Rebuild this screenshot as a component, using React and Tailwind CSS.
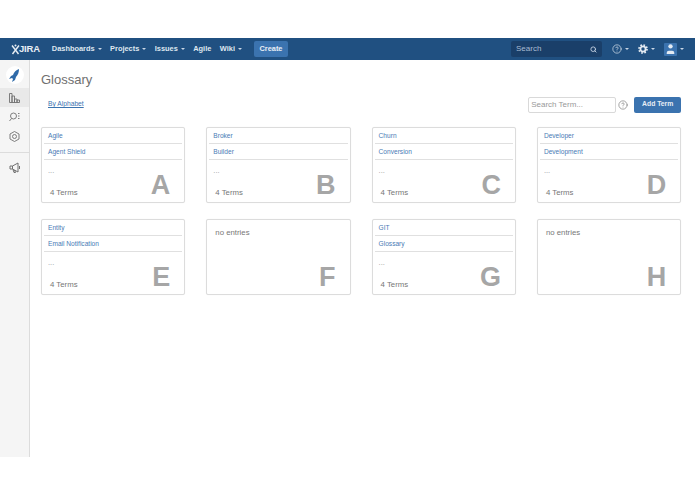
import React from 'react';
import { Search, CircleHelp, User } from 'lucide-react';

const cards = [
  { letter: 'A', terms: ['Agile', 'Agent Shield'] },
  { letter: 'B', terms: ['Broker', 'Builder'] },
  { letter: 'C', terms: ['Churn', 'Conversion'] },
  { letter: 'D', terms: ['Developer', 'Development'] },
  { letter: 'E', terms: ['Entity', 'Email Notification'] },
  { letter: 'F', terms: [] },
  { letter: 'G', terms: ['GIT', 'Glossary'] },
  { letter: 'H', terms: [] },
];

function Caret() {
  return <span className="ml-[3px] inline-block h-0 w-0 border-x-[2px] border-t-[2px] border-x-transparent border-t-[#c9d6e6] align-middle" />;
}

function NavItem({ label, caret = true }) {
  return (
    <span className="flex items-center text-[7.4px] font-bold text-[#dfe7f0]">
      {label}
      {caret && <Caret />}
    </span>
  );
}

function Card({ letter, terms }) {
  return (
    <div className="relative h-[76px] rounded-[2px] border border-[#dcdcdc] bg-white shadow-[0_0_1px_rgba(0,0,0,0.08)]">
      {terms.length > 0 ? (
        <div className="px-[2px]">
          {terms.map((t) => (
            <div key={t} className="flex h-[16px] items-center border-b border-[#e0e0e0] px-[4px] pt-[1px] text-[6.6px] text-[#4a7bb5]">
              {t}
            </div>
          ))}
          <div className="mt-[6px] px-[4px] text-[7.5px] leading-[10px] text-[#999]">...</div>
          <div className="mt-[12px] px-[6px] text-[7.8px] leading-[10px] text-[#777]">4 Terms</div>
        </div>
      ) : (
        <div className="px-[8px] pt-[8px] text-[7.8px] leading-[10px] text-[#777]">no entries</div>
      )}
      <span className="absolute bottom-[2px] right-[14px] text-[27px] font-bold leading-[30px] text-[#a6a6a6]">{letter}</span>
    </div>
  );
}

export default function App() {
  return (
    <div className="flex h-[494px] w-[695px] flex-col overflow-hidden bg-white font-['Liberation_Sans',Arial,sans-serif]">
      <div className="h-[38px]" />
      <header className="flex h-[22px] items-center bg-[#205081] pl-[11px] pr-[11px]">
        <div className="flex items-center text-[#e8eef5]">
          <svg width="9" height="11" viewBox="0 0 9 11" fill="none" stroke="currentColor" strokeWidth="1.4">
            <path d="M1 1.5 L4.5 6 L8 1.5 M4.5 6 L1.5 10 M4.5 6 L7.5 10" />
            <circle cx="4.5" cy="1.5" r="1" fill="currentColor" stroke="none" />
          </svg>
          <span className="-ml-[1px] text-[9.5px] font-bold tracking-[-0.2px]">JIRA</span>
        </div>
        <nav className="ml-[12px] flex items-center gap-[8.5px]">
          <NavItem label="Dashboards" />
          <NavItem label="Projects" />
          <NavItem label="Issues" />
          <NavItem label="Agile" caret={false} />
          <NavItem label="Wiki" />
        </nav>
        <span className="ml-[12px] flex h-[16px] w-[34px] items-center justify-center rounded-[2px] bg-[#3b73af] text-[7.4px] font-bold text-[#e8eef5]">Create</span>
        <div className="ml-auto flex h-[16px] w-[91px] items-center justify-between rounded-[2px] bg-[#1a3f69] px-[5px] text-[8px] text-[#a9bcd2]">
          Search
          <Search size={7} strokeWidth={3} className="text-[#c9d6e6]" />
        </div>
        <span className="ml-[10px] flex items-center text-[#e4ebf3]"><CircleHelp size={10} strokeWidth={1.6} /><Caret /></span>
        <span className="ml-[9px] flex items-center text-[#e4ebf3]">
          <svg width="10" height="10" viewBox="0 0 10 10" fill="none" stroke="currentColor">
            <circle cx="5" cy="5" r="2.6" strokeWidth="1.8" />
            <circle cx="5" cy="5" r="4" strokeWidth="1.7" strokeDasharray="1.6 1.54" />
          </svg>
          <Caret />
        </span>
        <span className="ml-[9px] flex items-center">
          <span className="flex h-[13px] w-[13px] items-center justify-center overflow-hidden rounded-[1px] bg-[#3b73af]"><User size={14} fill="#e4ebf3" strokeWidth={0} /></span>
          <Caret />
        </span>
      </header>
      <div className="flex h-[397px]">
        <aside className="flex w-[30px] shrink-0 flex-col border-r border-[#dcdcdc] bg-[#f5f5f5]">
          <div className="flex h-[28px] items-center justify-center pt-[2px]">
            <span className="flex h-[18px] w-[18px] items-center justify-center rounded-full bg-white">
              <svg width="11" height="13" viewBox="0 0 11 13" fill="#2f6aa8"><path d="M10 0 C7 1 5 3 4 6 L2 7 L0 10 L3 9 L4 10 L3 13 L6 11 L7 8 C9 6 10 3 10 0 Z" /></svg>
            </span>
          </div>
          <div className="flex h-[19px] items-center justify-center bg-[#e9e9e9]">
            <svg width="11" height="10" viewBox="0 0 11 10" fill="none" stroke="#707070" strokeWidth="0.9"><path d="M0.5 9.5V0.5H3V9.5M3 9.5V3H5.5V9.5M5.5 9.5V6H8V9.5M8 9.5V7H10.5V9.5H0.5" /></svg>
          </div>
          <div className="flex h-[19px] items-center justify-center">
            <svg width="11" height="10" viewBox="0 0 11 10" fill="none" stroke="#707070" strokeWidth="0.9"><circle cx="4.5" cy="4" r="3" /><path d="M2.5 6.5L0.5 9M9 1.5H10.5M9 4H10.5M9 6.5H10.5" /></svg>
          </div>
          <div className="flex h-[19px] items-center justify-center pt-[1px]">
            <svg width="11" height="11" viewBox="0 0 11 11" fill="none" stroke="#707070" strokeWidth="0.9"><path d="M5.5 0.5L10 3V8L5.5 10.5L1 8V3Z" /><circle cx="5.5" cy="5.5" r="2" /></svg>
          </div>
          <div className="mt-[7px] flex h-[29px] items-center justify-center border-t border-[#dcdcdc]">
            <svg width="12" height="11" viewBox="0 0 12 11" fill="none" stroke="#707070" strokeWidth="1"><path d="M1 4V7H3.5L9 10V1L3.5 4H1ZM3.5 4V7M4 7.5L5 10.5H6.5L5.5 8M10.5 4V7" /></svg>
          </div>
        </aside>
        <main className="flex-1 pl-[11px] pr-[14px]">
          <h1 className="mt-[11px] text-[13px] leading-[18px] text-[#707070]">Glossary</h1>
          <div className="mt-[7px] flex h-[17px] items-center justify-between">
            <span className="ml-[7px] text-[6.7px] text-[#3b73af] underline">By Alphabet</span>
            <div className="flex items-center">
              <span className="flex h-[16px] w-[88px] items-center rounded-[2px] border border-[#d9d9d9] px-[2px] text-[8px] text-[#999]">Search Term...</span>
              <CircleHelp size={10} strokeWidth={1.4} className="ml-[2px] text-[#666]" />
              <span className="ml-[6px] flex h-[16px] w-[47px] items-center justify-center rounded-[2px] bg-[#3b73af] text-[6.8px] font-bold text-[#e8eef5]">Add Term</span>
            </div>
          </div>
          <div className="mt-[14px] grid grid-cols-[repeat(4,144.3px)] gap-x-[21px] gap-y-[16px]">
            {cards.map((c) => (
              <Card key={c.letter} {...c} />
            ))}
          </div>
        </main>
      </div>
    </div>
  );
}
